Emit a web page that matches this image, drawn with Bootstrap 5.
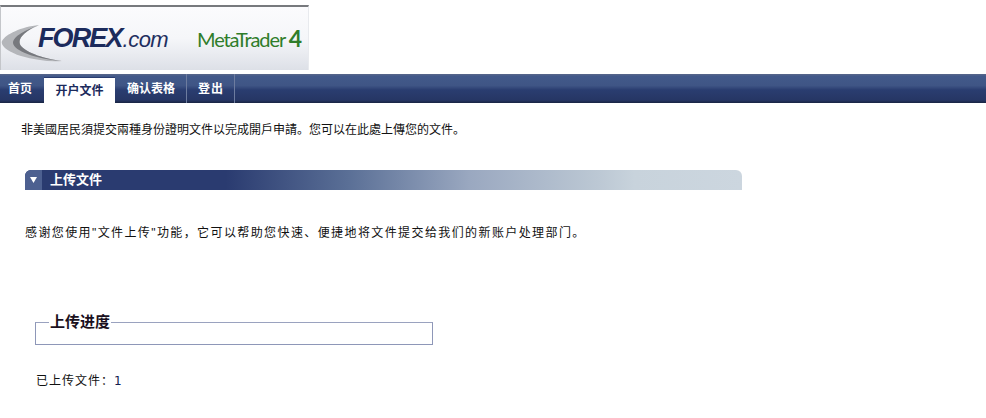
<!DOCTYPE html>
<html lang="zh">
<head>
  <meta charset="UTF-8" />
  <meta name="viewport" content="width=device-width, initial-scale=1.0" />
  <title>上传文件</title>
  <link href="https://cdn.jsdelivr.net/npm/bootstrap@5.3.3/dist/css/bootstrap.min.css" rel="stylesheet" />
  <style>
    body { font-family: "Liberation Sans", "Noto Sans CJK SC", sans-serif; font-size: 12px; color: #111; background: #fff; }
    .logo-wrap { height: 74px; padding-top: 5px; }
    .logo-box { width: 309px; height: 65px; border-top: 2px solid #77797d; border-right: 1px solid #e8eaee; border-left: 1px solid #c4c6ca; background: linear-gradient(#fbfbfd 0%, #f5f6f9 50%, #dde0e7 100%); }
    .logo-forex { margin-left: 37px; margin-top: 13px; font-size: 27px; line-height: 36px; font-weight: 700; font-style: italic; color: #1c2b5c; letter-spacing: -1.9px; white-space: nowrap; }
    .logo-com { font-size: 22px; font-weight: 400; font-style: italic; letter-spacing: -.5px; color: #1f2f60; margin-left: 1px; }
    .logo-mt { position: absolute; left: 196px; top: 13px; font-family: Lato, "Liberation Sans", sans-serif; font-size: 20px; line-height: 36px; color: #2f7d2a; letter-spacing: -1.1px; white-space: nowrap; }
    .logo-mt b { font-size: 23px; letter-spacing: 0; }
    .logo-swoosh { position: absolute; left: 0; top: 17px; }
    .top-bar { height: 29px; background: linear-gradient(#59678a 0, #42598a 8%, #3f5585 40%, #2a3d70 55%, #263664 90%, #182442 100%); }
    .top-tab { height: 29px; line-height: 31px; font-size: 12px; font-weight: 700; color: #fff; text-decoration: none; border-right: 1px solid #6d7c9f; }
    .top-tab.first-tab { padding: 0 12px 0 8px; border-right: 0; }
    .top-tab.active-tab { width: 71px; height: 28px; margin-top: 3px; line-height: 27px; text-align: center; background: #fff; color: #1c2b5c; border-top: 1px solid #2a3d70; border-right: 0; margin-bottom: -2px; }
    .tab-confirm { width: 72px; padding-left: 1px; text-align: center; }
    .tab-logout { width: 48px; padding-left: 1px; text-align: center; letter-spacing: 1px; }
    .intro-text { margin: 20px 0 0 21px; line-height: 14px; }
    .section-bar { width: 717px; height: 20px; margin: 33px 0 0 25px; border-radius: 6px 6px 0 0; color: #fff; font-weight: 700; font-size: 13px; line-height: 20px; overflow: hidden; background: linear-gradient(90deg, #2a3b70 0%, #2a3b70 28%, #5a6f96 45%, #9aa8c0 62%, #bcc8d4 80%, #c8d3dc 85%, #ccd6df 100%); }
    .section-arrow { width: 17px; height: 20px; background: #4d6090; flex: none; }
    .section-title { margin-left: 8px; }
    .thanks-text { margin: 35px 0 0 25px; line-height: 16px; letter-spacing: 1.4px; }
    .progress-box { width: 398px; height: 23px; margin: 81px 0 0 35px; border: 1px solid #8e97b8; border-top-color: #9aa2bf; position: relative; }
    .progress-title { position: absolute; left: 13px; top: -10px; padding: 0 1px; background: #fff; font-size: 15px; line-height: 18px; font-weight: 700; color: #1a1020; }
    .uploaded-text { margin: 28px 0 0 36px; line-height: 16px; letter-spacing: 1px; }
    .uploaded-num { color: #14204f; font-family: "DejaVu Sans", sans-serif; font-size: 12px; }
  </style>
</head>
<body>
  <header>
    <div class="logo-wrap">
      <div class="logo-box d-flex position-relative">
        <svg class="logo-swoosh" width="64" height="40" viewBox="0 0 64 40" aria-hidden="true">
          <path d="M38 1 C20 3 5 10 1 17 C-1 22 8 28 20 32 C34 36 48 38 61 37 C44 35 26 29 20 22 C15 15 24 7 38 1 Z" fill="#b4b6ba"/>
          <path d="M38 1 C25 6 12 12 12 19 C13 27 35 35 61 37 C44 35 26 29 20 22 C15 15 24 7 38 1 Z" fill="#77797e"/>
        </svg>
        <div class="logo-forex">FOREX<span class="logo-com">.com</span></div>
        <div class="logo-mt">MetaTrader <b>4</b></div>
      </div>
    </div>
    <nav class="top-bar d-flex">
      <a class="top-tab first-tab" href="#">首页</a>
      <a class="top-tab active-tab" href="#">开户文件</a>
      <a class="top-tab tab-confirm" href="#">确认表格</a>
      <a class="top-tab tab-logout" href="#">登出</a>
    </nav>
  </header>
  <main>
    <p class="intro-text">非美國居民須提交兩種身份證明文件以完成開戶申請。您可以在此處上傳您的文件。</p>
    <div class="section-bar d-flex">
      <div class="section-arrow d-flex align-items-center justify-content-center">
        <svg width="7" height="6" viewBox="0 0 7 6" aria-hidden="true"><path d="M0 0H7L3.5 6Z" fill="#fff"/></svg>
      </div>
      <span class="section-title">上传文件</span>
    </div>
    <p class="thanks-text">感谢您使用"文件上传"功能，它可以帮助您快速、便捷地将文件提交给我们的新账户处理部门。</p>
    <div class="progress-box"><span class="progress-title">上传进度</span></div>
    <p class="uploaded-text">已上传文件：<span class="uploaded-num">1</span></p>
  </main>
  <script src="https://cdn.jsdelivr.net/npm/bootstrap@5.3.3/dist/js/bootstrap.bundle.min.js"></script>
</body>
</html>
